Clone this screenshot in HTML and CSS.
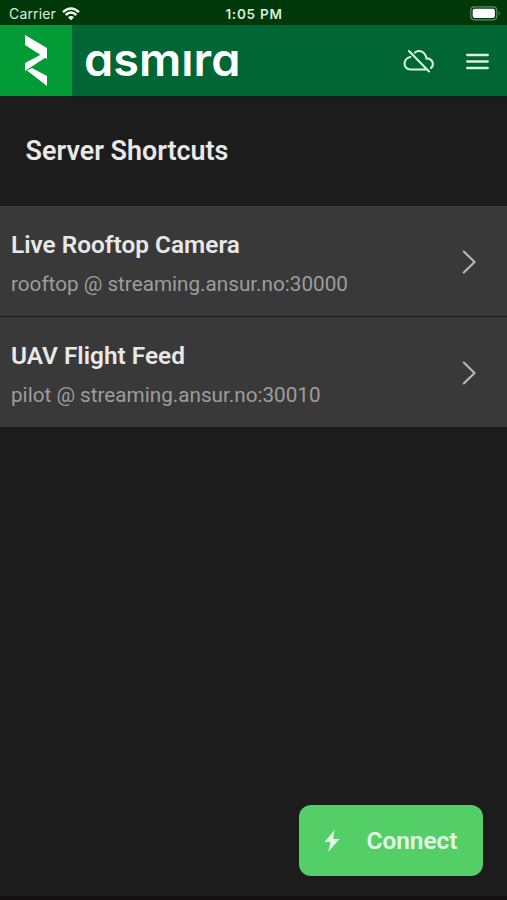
FILE: index.html
```html
<!DOCTYPE html>
<html lang="en">
<head>
<meta charset="utf-8">
<title>Asmira</title>
<link rel="stylesheet" href="styles.css">
</head>
<body>
<div class="status">
  <div class="carrier">Carrier
    <svg width="18" height="14" viewBox="0 0 18 14" fill="none" stroke="#f0faf0" stroke-width="2.4"><path d="M1 5.1Q9-2.1 17 5.1M3.7 8Q9 3.2 14.3 8"/><path d="M9 13.3L6 10.3Q9 7.9 12 10.3Z" fill="#f0faf0" stroke="none"/></svg>
  </div>
  <div class="time">1:05 PM</div>
  <svg class="battery" width="31" height="15" viewBox="0 0 31 15"><rect x=".8" y=".8" width="26" height="13" rx="3.5" fill="none" stroke="#648b66" stroke-width="1.2"/><rect x="2.7" y="2.7" width="22.2" height="9.2" rx="1.8" fill="#fff"/><path d="M28.7 5Q31 7.3 28.7 9.6Z" fill="#648b66"/></svg>
</div>
<header class="header">
  <div class="mark"><svg width="24" height="53" viewBox="0 0 24 53" fill="#fff"><path d="M1 1L23 14V25L1 11ZM1 29L18 20L21.5 23.5L1 37ZM3 36.5L8 34L23 42V52Z"/></svg></div>
  <svg class="wordmark" width="158" height="70" viewBox="0 0 158 70"><text x="0" y="49.5" textLength="156.5" lengthAdjust="spacingAndGlyphs">asmira</text><rect x="90" y="5" width="30" height="18.5" fill="#006633"/></svg>
  <svg class="cloud" width="32" height="25" viewBox="0 0 32 25" fill="none" stroke="#d5f3da" stroke-width="2.1" stroke-linecap="round"><path d="M6 2L26 22.5M7.3 8C.1 9.2-.8 20.1 7.5 20.5H23M11.8 3.6C16 .2 22.4 2.5 23.4 9.4C29.8 9.6 31.6 15.6 28 19"/></svg>
  <svg class="menu" width="23" height="17" viewBox="0 0 23 17" stroke="#d5f3da" stroke-width="2.3" stroke-linecap="round"><path d="M1.2 2H21.8M1.2 8.5H21.8M1.2 15H21.8"/></svg>
</header>
<main class="content">
  <h1>Server Shortcuts</h1>
  <section class="row">
    <div><h2>Live Rooftop Camera</h2><p>rooftop @ streaming.ansur.no:30000</p></div>
    <svg width="15" height="26" viewBox="0 0 15 26"><path d="M1.8 2.5L12.6 13L1.8 23.5"/></svg>
  </section>
  <section class="row">
    <div><h2>UAV Flight Feed</h2><p>pilot @ streaming.ansur.no:30010</p></div>
    <svg width="15" height="26" viewBox="0 0 15 26"><path d="M1.8 2.5L12.6 13L1.8 23.5"/></svg>
  </section>
  <button class="connect"><svg width="18" height="24" viewBox="0 0 18 24" fill="#e3fbe6"><path d="M11.5 1L1.5 13H7.5L5.2 23L16.5 10H10.2Z"/></svg><span>Connect</span></button>
</main>
</body>
</html>
```

FILE: styles.css
```css
* { box-sizing: border-box; }
body { margin: 0; height: 900px; display: flex; flex-direction: column; overflow: hidden; background: #1c1c1c; font-family: Roboto, sans-serif; color: #e8e8e8; }
svg { display: block; flex: none; }
.status { height: 25px; flex: none; display: grid; grid-template-columns: 1fr auto 1fr; align-items: center; padding: 2px 6px 0 9px; background: #003809; color: #d9efd9; font: 14px/20px Inter, sans-serif; }
.carrier { display: flex; align-items: center; gap: 6px; letter-spacing: .15px; }
.time { font-weight: 600; font-size: 13.5px; letter-spacing: .75px; margin-left: -2px; }
.battery { justify-self: end; }
.header { height: 72px; flex: none; display: flex; align-items: center; background: #006633; border-bottom: 1px solid #0c1f14; }
.mark { width: 72px; height: 71px; display: grid; place-items: center; background: #039b35; }
.wordmark { margin-left: 12px; }
.wordmark text { font: 600 45px Inter, sans-serif; font-feature-settings: "cv11"; fill: #fff; }
.cloud { margin: 2px 0 0 161px; }
.menu { margin: 1px 0 0 31px; }
.content { flex: 1; display: flex; flex-direction: column; border-bottom: 4px solid #121011; }
h1, h2, p { margin: 0; }
h1 { height: 109px; flex: none; padding: 36px 25.6px 0; font-size: 26.9px; line-height: 37px; font-weight: 600; }
.row { height: 111px; flex: none; display: flex; justify-content: space-between; padding: 23px 30px 0 11px; background: #393939; border-bottom: 1px solid #1c1c1c; }
h2 { font-size: 24.4px; line-height: 32px; font-weight: 600; }
p { margin-top: 9px; font-size: 20.7px; line-height: 28px; color: #9d9d9d; }
.row svg { margin-top: 20px; fill: none; stroke: #b8b8b8; stroke-width: 2.1; stroke-linecap: round; stroke-linejoin: round; }
.connect { width: 184px; height: 71px; margin: auto 24px 20px auto; display: flex; align-items: center; border: 0; border-radius: 12px; padding: 0 24px; gap: 25.5px; background: #54cf67; color: #e3fbe6; font: 600 24.4px Roboto, sans-serif; }
```
